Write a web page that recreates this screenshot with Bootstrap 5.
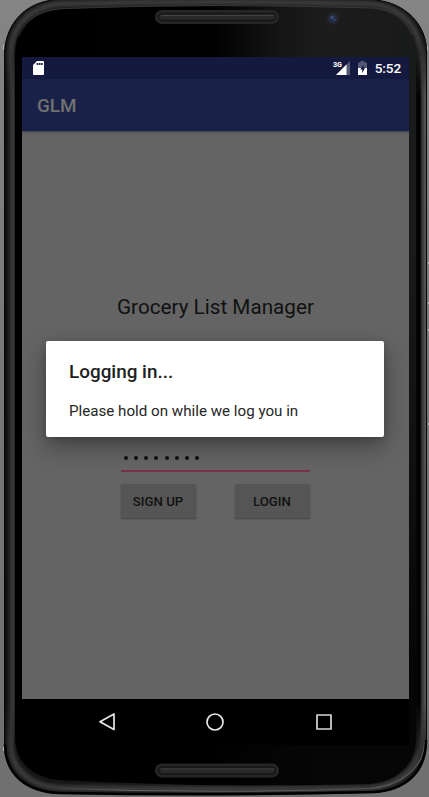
<!DOCTYPE html>
<html lang="en">
<head>
<meta charset="utf-8">
<meta name="viewport" content="width=device-width, initial-scale=1">
<title>GLM</title>
<link href="https://cdn.jsdelivr.net/npm/bootstrap@5.3.0/dist/css/bootstrap.min.css" rel="stylesheet">
<style>
body{width:429px;height:797px;background:#858585;font-family:Roboto,sans-serif;color:#111}
.phone{width:429px;height:797px;padding:57px 20px 0 22px}
.shell{z-index:0}
.screen{width:387px;height:641.5px;z-index:1;background:#646464}
.status{height:22px;background:#14193f;color:#fff;padding:0 8px 0 11px}
.clock{font-size:13.6px;font-weight:500;line-height:22px;letter-spacing:-.12px}
.appbar{height:52px;background:#1a2148;color:#717171;font-size:18.9px;font-weight:500;padding:3px 0 0 15px;box-shadow:0 1px 2px #0006}
.app-title{font-size:20.7px;line-height:24px;margin-top:164px}
.dialog{width:338px;height:96px;margin:22px 1px 0 0;padding:19px 23px;border-radius:2px;box-shadow:0 9px 22px 1px #0005,0 2px 6px #0002;z-index:2}
.dialog-title{font-size:18.9px;font-weight:500;line-height:24px;color:#212121}
.dialog-text{font-size:15.15px;line-height:20px;margin-top:17px;color:#262626}
.entry{width:189px;margin:4px 1px 0 0}
.dots{height:31px;padding:14.5px 0 0 3px;gap:6.25px;border-bottom:2px solid #7a3049}
.dots i{width:4px;height:4px;background:#111;border-radius:50%}
.key{width:75px;height:34px;background:#555;color:#111;border:0;border-radius:1.5px;font-size:13.2px;font-weight:500;padding:2px 0 0;box-shadow:0 1px 2px #0005}
.navkeys{z-index:1;width:387px;height:46px;background:#000;padding:0 75.5px 0 74.5px}
</style>
<script src="https://cdn.jsdelivr.net/npm/bootstrap@5.3.0/dist/js/bootstrap.bundle.min.js"></script>
</head>
<body class="m-0 overflow-hidden">
<div class="phone position-relative">
<svg class="shell position-absolute top-0 start-0" width="429" height="797" viewBox="0 0 429 797">
  <defs>
    <linearGradient id="glass" x1="0" x2="1" y1="0" y2="0"><stop offset="0" stop-color="#000"/><stop offset=".5" stop-color="#020101"/><stop offset=".66" stop-color="#151515"/><stop offset=".76" stop-color="#1b1c1b"/><stop offset="1" stop-color="#191b1a"/></linearGradient>
    <linearGradient id="fade" x1="0" x2="0" y1="0" y2="1"><stop offset=".3" stop-color="#000" stop-opacity="0"/><stop offset=".85" stop-color="#000" stop-opacity=".8"/></linearGradient>
    <linearGradient id="bg" x1="0" x2="0" y1="0" y2="1"><stop offset="0" stop-color="#858585"/><stop offset=".5" stop-color="#777"/><stop offset="1" stop-color="#707070"/></linearGradient>
    <linearGradient id="leftrim" x1="4" x2="15" y1="0" y2="0" gradientUnits="userSpaceOnUse"><stop offset="0" stop-color="#050505"/><stop offset=".35" stop-color="#181818"/><stop offset=".8" stop-color="#3c3c3c"/><stop offset="1" stop-color="#222"/></linearGradient>
    <linearGradient id="rightrim" x1="416" x2="427" y1="0" y2="0" gradientUnits="userSpaceOnUse"><stop offset="0" stop-color="#080808"/><stop offset=".35" stop-color="#000"/><stop offset=".52" stop-color="#303030"/><stop offset=".8" stop-color="#55514f"/><stop offset=".88" stop-color="#55514f"/><stop offset=".9" stop-color="#111"/></linearGradient>
    <linearGradient id="base" x1="60" x2="374" y1="0" y2="0" gradientUnits="userSpaceOnUse"><stop offset="0" stop-color="#555" stop-opacity=".3"/><stop offset=".2" stop-color="#666"/><stop offset="1" stop-color="#555"/></linearGradient>
    <linearGradient id="ends" x1="0" x2="0" y1="40" y2="760" gradientUnits="userSpaceOnUse"><stop offset="0" stop-color="#000"/><stop offset=".08" stop-color="#fff"/><stop offset=".92" stop-color="#fff"/><stop offset="1" stop-color="#000"/></linearGradient>
    <mask id="rimfade" maskUnits="userSpaceOnUse" x="0" y="40" width="429" height="720"><rect y="40" width="429" height="720" fill="url(#ends)"/></mask>
    <filter id="soft" x="-5%" y="-5%" width="110%" height="110%"><feGaussianBlur stdDeviation="1.4"/></filter>
    <clipPath id="bodyclip"><path d="M4 56C4 24 25 3 53 0Q215 -5 376 0C405 3 427 24 427 52V740C427 773 405 791 374 793Q215 796 60 794C27 793 4 775 4 744Z"/></clipPath>
  </defs>
  <rect width="429" height="797" fill="url(#bg)"/>
  <g clip-path="url(#bodyclip)">
    <rect width="429" height="797" fill="#161616"/>
    <path d="M10 60C10 27 28 8 58 4Q215 0 373 4C402 8 421 27 421 60V738C421 768 399 786 370 788Q215 790 61 788C31 787 10 770 10 740Z" fill="none" stroke="#383838" stroke-width="6" filter="url(#soft)"/>
    <g mask="url(#rimfade)"><rect x="4" y="40" width="12" height="720" fill="url(#leftrim)"/><rect x="415" y="40" width="12" height="720" fill="url(#rightrim)"/></g>
    <path d="M60 788.500Q215 794 370 788.500C400 786 424.500 768 424.500 741" fill="none" stroke="url(#base)" stroke-width="1.200"/>
  </g>
  <path d="M15 54C15 28 32 11 64 9Q215 3 373 8C398 11 416 28 416 54V738C416 764 398 781 370 784Q215 788 60 780C32 778 15 761 15 736Z" fill="url(#glass)"/>
  <path d="M15 54C15 28 32 11 64 9Q215 3 373 8C398 11 416 28 416 54V738C416 764 398 781 370 784Q215 788 60 780C32 778 15 761 15 736Z" fill="url(#fade)"/>
  <path d="M19 36C27 18 41 10 64 8.500Q215 3 373 8C391 10 405 18 412 35" fill="none" stroke="#444" stroke-width=".7"/>
  <path d="M5 744C5 775 27 792 60 793Q215 796 374 792C405 790 426 773 426 740" fill="none" stroke="#000" stroke-width="2.500"/>
  <path d="M4.500 744V56C4.500 24 25 3 53 0M376 0C405 3 426.500 24 426.500 52V740" fill="none" stroke="#080808" stroke-width="1"/>
  <path d="M3.500 45V50M427.500 46V50M3.500 747V751" stroke="#bbb"/>
  <path d="M428.500 262V264M428.500 302V304M428.500 329V331M428.500 423V425" stroke="#bbb"/>
  <g id="speaker"><rect x="155" y="10" width="124" height="14" rx="7" fill="#262626"/><rect x="158.500" y="13.500" width="117" height="7" rx="3.500" fill="#292929" stroke="#151515" stroke-width="1.500"/><path d="M161 15.500H274" stroke="#404040"/></g>
  <use href="#speaker" y="753.500"/>
  <circle cx="333" cy="18.500" r="6.500" fill="#232325"/><circle cx="333" cy="18.500" r="4.300" fill="#222c44"/><circle cx="332" cy="17.500" r="1.700" fill="#384c74"/><circle cx="334.500" cy="20" r="1.200" fill="#324268"/>
</svg>
<main class="screen position-relative d-flex flex-column">
  <div class="status d-flex align-items-center">
    <svg width="11" height="14" viewBox="0 0 11 14"><path d="M4 0H10Q11 0 11 1V13Q11 14 10 14H1Q0 14 0 13V4Z" fill="#fff"/><path d="M4.500 2V4M6.700 2V4M8.900 2V4" stroke="#252a51" stroke-width="1.700"/></svg>
    <svg class="ms-auto" width="17" height="14" viewBox="0 0 17 14"><path d="M17 0V14H3Z" fill="#555976"/><path d="M13.500 3.500V14H3Z" fill="#fff"/><text x="0" y="6" font-size="7" font-weight="700" fill="#fff" stroke="#14193f" stroke-width="1.500" paint-order="stroke" textLength="9" lengthAdjust="spacingAndGlyphs">3G</text></svg>
    <svg class="ms-2" width="9" height="14" viewBox="0 0 9 14"><path d="M0 1.500H2.500V0H6.500V1.500H9V14H0Z" fill="#555976"/><path d="M0 7H9V14H0Z" fill="#fff"/><path d="M5.500 3.500L2.300 8.500H4.200V12L7 7H5.500Z" fill="#14193f"/></svg>
    <span class="clock ps-1 ms-1 me-n1">5:52</span>
  </div>
  <header class="appbar d-flex align-items-center">GLM</header>
  <section class="d-flex flex-column align-items-center">
    <div class="app-title">Grocery List Manager</div>
    <div class="dialog bg-white position-relative" role="dialog">
      <div class="dialog-title">Logging in...</div>
      <div class="dialog-text">Please hold on while we log you in</div>
    </div>
    <form class="entry">
      <div class="dots d-flex"><i></i><i></i><i></i><i></i><i></i><i></i><i></i><i></i></div>
      <div class="d-flex justify-content-between mt-2 pt-1"><button type="button" class="key">SIGN UP</button><button type="button" class="key">LOGIN</button></div>
    </form>
  </section>
</main>
<nav class="navkeys position-relative d-flex justify-content-between align-items-center">
  <svg width="20" height="20" viewBox="0 0 20 20" fill="none" stroke="#e8e8e8" stroke-width="1.700" stroke-linejoin="round"><path d="M17 2V17.500L3 9.700Z"/></svg>
  <svg width="20" height="20" viewBox="0 0 20 20" fill="none" stroke="#e8e8e8" stroke-width="1.700"><circle cx="10" cy="10" r="8"/></svg>
  <svg width="20" height="20" viewBox="0 0 20 20" fill="none" stroke="#d8d8d8" stroke-width="1.700" stroke-linejoin="round"><rect x="3" y="3" width="14" height="14"/></svg>
</nav>
</div>
</body>
</html>
